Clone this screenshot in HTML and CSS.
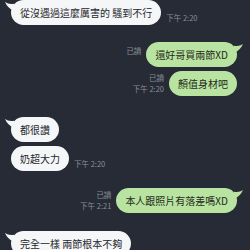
FILE: index.html
```html
<!DOCTYPE html>
<html lang="zh-Hant">
<head>
<meta charset="utf-8">
<link rel="stylesheet" href="styles.css">
</head>
<body>
<div class="chat">
  <div class="row in g0">
    <div class="bubble white"><svg class="tail tail-l" viewBox="0 0 10 10"><path d="M10 2 Q4 3 0 0 Q3 7 10 10 Z"/></svg>從沒遇過這麼厲害的 騷到不行</div>
    <div class="meta"><span>下午 2:20</span></div>
  </div>
  <div class="row out g1">
    <div class="meta top"><span>已讀</span></div>
    <div class="bubble green"><svg class="tail tail-r" viewBox="0 0 10 10"><path d="M0 2 Q6 3 10 0 Q7 7 0 10 Z"/></svg>還好哥買兩節XD</div>
  </div>
  <div class="row out g2">
    <div class="meta"><span>已讀</span><span>下午 2:20</span></div>
    <div class="bubble green">顏值身材吧</div>
  </div>
  <div class="row in g3">
    <div class="bubble white"><svg class="tail tail-l" viewBox="0 0 10 10"><path d="M10 2 Q4 3 0 0 Q3 7 10 10 Z"/></svg>都很讚</div>
  </div>
  <div class="row in g2">
    <div class="bubble white">奶超大力</div>
    <div class="meta"><span>下午 2:20</span></div>
  </div>
  <div class="row out g1">
    <div class="meta"><span>已讀</span><span>下午 2:21</span></div>
    <div class="bubble green"><svg class="tail tail-r" viewBox="0 0 10 10"><path d="M0 2 Q6 3 10 0 Q7 7 0 10 Z"/></svg>本人跟照片有落差嗎XD</div>
  </div>
  <div class="row in g4">
    <div class="bubble white"><svg class="tail tail-l" viewBox="0 0 10 10"><path d="M10 2 Q4 3 0 0 Q3 7 10 10 Z"/></svg>完全一樣 兩節根本不夠</div>
  </div>
</div>
</body>
</html>
```
FILE: styles.css
```css
html, body {
  margin: 0;
  padding: 0;
  background: #262b36;
  height: 250px;
  overflow: hidden;
}
.chat {
  display: flex;
  flex-direction: column;
  padding: 0 13px 0 11px;
  font-family: "Noto Sans CJK TC", "Noto Sans", sans-serif;
}
.row {
  display: flex;
  align-items: flex-end;
  gap: 5px;
}
.row.in { justify-content: flex-start; }
.row.out { justify-content: flex-end; }
.g0 { margin-top: 0; }
.g1 { margin-top: 17px; }
.g2 { margin-top: 4px; }
.g3 { margin-top: 21px; }
.g4 { margin-top: 18px; }
.bubble {
  position: relative;
  font-size: 10px;
  line-height: 13px;
  padding: 6px 9px;
  border-radius: 12.5px;
  white-space: nowrap;
}
.white {
  background: #f5f6f8;
  color: #25272b;
}
.green {
  background: #b9e3a0;
  color: #1f2a1c;
}
.tail {
  position: absolute;
  width: 9px;
  height: 9px;
  top: 2px;
}
.white .tail { fill: #f5f6f8; }
.green .tail { fill: #b9e3a0; }
.tail-l { left: -6px; }
.tail-r { right: -6px; }
.meta {
  display: flex;
  flex-direction: column;
  align-items: flex-end;
  font-size: 7.5px;
  line-height: 11px;
  color: #8a8f99;
  padding-bottom: 2px;
  white-space: nowrap;
}
.row.in .meta { align-items: flex-start; }
.meta.top {
  align-self: flex-start;
  padding-top: 3px;
}
```
